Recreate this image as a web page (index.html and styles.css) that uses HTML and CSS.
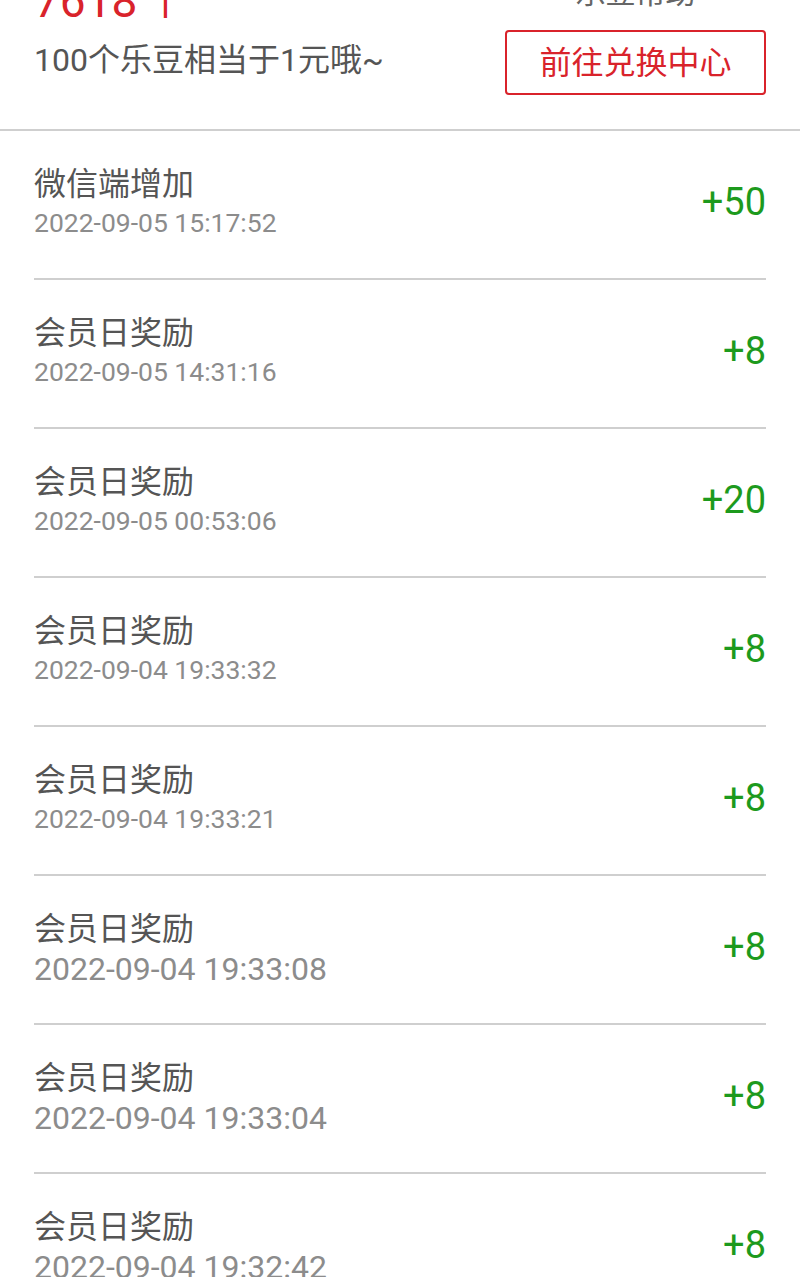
FILE: index.html
```html
<!DOCTYPE html>
<html lang="zh-CN">
<head>
    <meta charset="UTF-8">
    <meta name="viewport" content="width=device-width, initial-scale=1.0">
    <title>乐豆明细</title>
    <link rel="stylesheet" href="styles.css">
</head>
<body>
    <!-- 乐豆总数 -->
    <div class="summary">
        <div class="summary-left">
            <div class="total">7618<span class="unit">个</span></div>
            <div class="tip">100个乐豆相当于1元哦~</div>
        </div>
        <div class="summary-right">
            <div class="help">乐豆帮助</div>
            <button type="button" class="exchange">前往兑换中心</button>
        </div>
    </div>

    <!-- 乐豆记录 -->
    <ul class="records">
        <li class="record">
            <div class="info">
                <div class="title">微信端增加</div>
                <div class="time">2022-09-05 15:17:52</div>
            </div>
            <div class="amount">+50</div>
        </li>
        <li class="record">
            <div class="info">
                <div class="title">会员日奖励</div>
                <div class="time">2022-09-05 14:31:16</div>
            </div>
            <div class="amount">+8</div>
        </li>
        <li class="record">
            <div class="info">
                <div class="title">会员日奖励</div>
                <div class="time">2022-09-05 00:53:06</div>
            </div>
            <div class="amount">+20</div>
        </li>
        <li class="record">
            <div class="info">
                <div class="title">会员日奖励</div>
                <div class="time">2022-09-04 19:33:32</div>
            </div>
            <div class="amount">+8</div>
        </li>
        <li class="record">
            <div class="info">
                <div class="title">会员日奖励</div>
                <div class="time">2022-09-04 19:33:21</div>
            </div>
            <div class="amount">+8</div>
        </li>
        <li class="record">
            <div class="info">
                <div class="title">会员日奖励</div>
                <div class="time large">2022-09-04 19:33:08</div>
            </div>
            <div class="amount">+8</div>
        </li>
        <li class="record">
            <div class="info">
                <div class="title">会员日奖励</div>
                <div class="time large">2022-09-04 19:33:04</div>
            </div>
            <div class="amount">+8</div>
        </li>
        <li class="record">
            <div class="info">
                <div class="title">会员日奖励</div>
                <div class="time large">2022-09-04 19:32:42</div>
            </div>
            <div class="amount">+8</div>
        </li>
    </ul>
</body>
</html>
```

FILE: styles.css
```css
body {
    margin: 0;
    background-color: #fff;
    font-family: Roboto, "Noto Sans CJK SC", sans-serif;
    color: #555;
}
.summary {
    display: flex;
    justify-content: space-between;
    align-items: flex-start;
    margin-top: -25px;
    padding: 0 34px 34px;
    border-bottom: 2px solid #cfcfcf;
}
.total {
    font-size: 46px;
    line-height: 52px;
    color: #d9232b;
}
.total .unit {
    font-size: 40px;
    margin-left: 8px;
    vertical-align: 2px;
}
.tip {
    margin-top: 12px;
    font-size: 32px;
    line-height: 40px;
    color: #555;
}
.summary-right {
    width: 261px;
    text-align: center;
}
.help {
    font-size: 30px;
    line-height: 36px;
    color: #666;
}
.exchange {
    display: block;
    width: 261px;
    height: 65px;
    margin-top: 19px;
    padding: 0;
    background: #fff;
    border: 2px solid #d9232b;
    border-radius: 4px;
    color: #d9232b;
    font-family: Roboto, "Noto Sans CJK SC", sans-serif;
    font-size: 32px;
    line-height: 40px;
    cursor: pointer;
}
.records {
    list-style: none;
    margin: 0;
    padding: 0 34px;
}
.record {
    display: flex;
    justify-content: space-between;
    align-items: flex-start;
    height: 149px;
    box-sizing: border-box;
    padding-top: 33px;
    border-bottom: 2px solid #cfcfcf;
}
.title {
    font-size: 32px;
    line-height: 40px;
    color: #555;
}
.time {
    font-size: 26.5px;
    line-height: 37px;
    color: #8c8c8c;
}
.time.large {
    font-size: 32px;
    line-height: 40px;
}
.amount {
    margin-top: 18px;
    font-size: 38px;
    line-height: 40px;
    color: #1d9a1d;
}
```
